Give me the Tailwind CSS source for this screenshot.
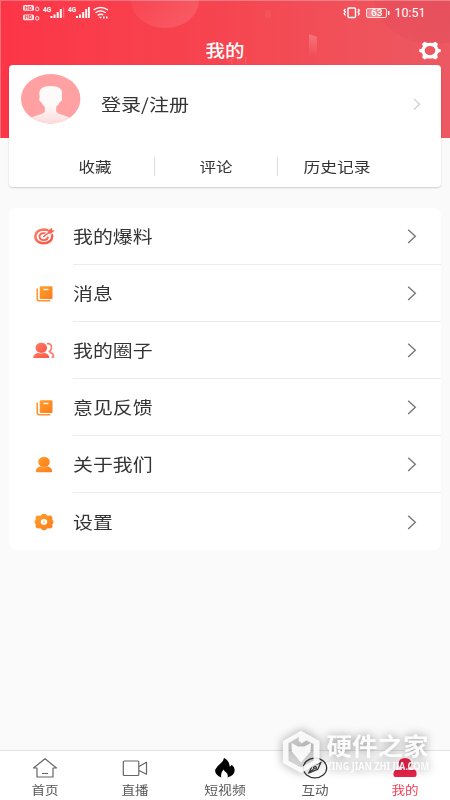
<!DOCTYPE html>
<html lang="zh-CN">
<head>
<meta charset="utf-8">
<title>我的</title>
<script src="https://cdn.jsdelivr.net/npm/@tailwindcss/browser@4"></script>
</head>
<body class="relative h-[800px] w-[450px] overflow-hidden bg-[#fafafa] text-[#333] font-['Noto_Sans_CJK_SC',sans-serif]">
<svg width="0" height="0" class="absolute">
  <defs>
    <linearGradient id="red" x1="0" y1="0" x2="1" y2="1"><stop stop-color="#ff7d62"/><stop offset="1" stop-color="#fb5549"/></linearGradient>
    <linearGradient id="orange" x1="0" y1="0" x2="1" y2="1"><stop stop-color="#ffa02c"/><stop offset="1" stop-color="#fc7c1c"/></linearGradient>
    <symbol id="chev" viewBox="0 0 10 16"><path d="M1.2 1.700 8.300 8.300 1.200 14.900" fill="none" stroke="currentColor" stroke-width="1.4"/></symbol>
    <symbol id="book" viewBox="0 0 18 18"><path d="M5 1.300h10.300q1.200 0 1.200 1.200v10.300q0 1.200-1.200 1.200H5q-1.300 0-1.300-1.200V2.500Q3.700 1.300 5 1.300Z" fill="url(#orange)"/><path d="M1.200 4v9.800q0 2 2 2h10.500" fill="none" stroke="#ff9130" stroke-width="1.500" stroke-linecap="round"/><path d="M7.500 4.500h5" stroke="#fff" stroke-width="1.300"/></symbol>
  </defs>
</svg>

<header class="relative h-[138px] overflow-hidden bg-gradient-to-r from-[#fc3547] via-[#f64550] to-[#ec5962]">
  <svg class="absolute inset-0" width="450" height="138" viewBox="0 0 450 138">
    <defs>
      <linearGradient id="c1" x1="0" y1="0" x2="1" y2="1"><stop stop-color="#fff" stop-opacity="0"/><stop offset="1" stop-color="#fff" stop-opacity=".14"/></linearGradient>
      <linearGradient id="c2" x1="1" y1="0" x2="0" y2="1"><stop stop-color="#c93048" stop-opacity=".35"/><stop offset="1" stop-color="#c93048" stop-opacity=".06"/></linearGradient>
      <linearGradient id="c3" x1="0" y1="0" x2="0" y2="1"><stop stop-color="#fff" stop-opacity=".22"/><stop offset="1" stop-color="#fff" stop-opacity="0"/></linearGradient>
    </defs>
    <ellipse cx="165" cy="1" rx="34" ry="27" fill="url(#c1)"/>
    <ellipse cx="434" cy="-4" rx="60" ry="48" fill="url(#c2)"/>
    <path d="m309 34 8 3v19h-8Z" fill="url(#c3)"/>
    <path d="M265 10h6v8h-6Z" fill="#fff" opacity=".05"/>
    <path d="m228 62 10-7v10m-6 0V54m13 11 1-8" stroke="#fff" opacity=".13" fill="none"/>
    <path d="M0 .5h450M.5 0v138" stroke="#fff" opacity=".28"/>
  </svg>
  <div class="relative flex h-[26px] items-center justify-between pl-[23px] pr-[24px] text-white">
    <svg width="87" height="18" viewBox="0 0 87 18" fill="#fff">
      <rect x="0" y="1" width="11" height="5.800" rx="1.500" opacity=".88"/><rect x="0" y="10.500" width="11" height="5.800" rx="1.500" opacity=".88"/>
      <g fill="#f43e4c" font-family="Roboto" font-size="5.500" font-weight="700"><text x="1.800" y="5.900">HD</text><text x="1.800" y="15.400">HD</text></g>
      <rect x="12.700" y="3.200" width="3" height="3.500" rx="1" fill="none" stroke="#fff" stroke-width=".9"/><rect x="12.700" y="12.600" width="3" height="3.500" rx="1" fill="none" stroke="#fff" stroke-width=".9"/>
      <g font-family="Roboto" font-size="6.500" font-weight="700"><text x="20" y="7.500">4G</text><text x="45" y="7.500">4G</text></g>
      <path d="M27.500 12h2v2h-2zM30.500 10.500h2V14h-2zM33.700 8h2v6h-2zM36.800 5h2v9h-2zM53 12h2v2h-2zM56 10.500h2V14h-2zM59.200 8h2v6h-2zM62.200 5h2v9h-2zM65 3h1.800v11H65z"/>
      <path d="M40 3.500h1.300V14H40z" opacity=".3"/>
      <g fill="none" stroke="#fff" stroke-width="1.400"><path d="M70.500 6q7.200-5 14.500 0M72.500 8.700q5-3.700 10.200 0M74.700 11.300q3-2 5.500-.3"/></g><path d="M75.800 12.700h3.200L77.400 14.500ZM80 12.500h1.600v2H80zM83 12.500h1.600v2H83z"/>
    </svg>
    <div class="flex items-center gap-[5px]">
      <svg width="49" height="14" viewBox="0 0 49 14" class="translate-x-px" fill="none" stroke="#fff"><rect x="6" y="2" width="7.500" height="9.500" rx="1" stroke-width="1.400"/><path d="m3.500 3-1.400 1.500L3.500 6 2.100 7.500l1.400 2M16 3l1.400 1.500L16 6l1.400 1.500L16 9.500" stroke-width="1.300"/><rect x="24.500" y="2.500" width="20" height="9" rx="1.500" stroke-opacity=".8"/><path d="M25 3h13v8H25z" fill="#fff" fill-opacity=".3" stroke="none"/><path d="M46.700 5v4" stroke-width="1.500"/><text x="29" y="10.200" font-family="Roboto" font-size="8.500" font-weight="500" textLength="11.500" lengthAdjust="spacingAndGlyphs" fill="#fff" stroke="none">63</text></svg>
      <span class="w-[31px] pt-px font-[Roboto] text-[12.500px] leading-none"><span class="inline-block origin-left -translate-x-[0.500px]">10:51</span></span>
    </div>
  </div>
  <div class="relative flex h-[48px] items-center justify-center text-white">
    <h1 class="-translate-x-[0.500px] scale-x-[1.180] text-[16.500px] font-medium leading-none">我的</h1>
    <svg class="absolute right-[9px] top-[15px]" width="22" height="19" viewBox="0 0 21 19" preserveAspectRatio="none"><path fill="#fff" fill-rule="evenodd" d="M5.300.8 8 2q2.500-.6 5 0L15.700.8 18 2.800l-.7 2.600q1 1 1.200 2.300l2.200.5v2.800l-2.200.5q-.3 1.200-1.200 2.200l.7 2.700-2.300 2L13 17.200q-2.500.6-5 0l-2.700 1.200L3 16.400l.7-2.700q-1-1-1.200-2.200L.3 11V8.200l2.200-.5q.3-1.300 1.200-2.300L3 2.800ZM10.500 5A5.100 4.600 0 0 0 10.500 14.200 5.100 4.600 0 0 0 10.500 5Z"/></svg>
  </div>
</header>

<main class="relative -mt-[73px] px-[9px]">
  <section class="h-[122px] rounded-[4px] bg-white shadow-[0_1px_2px_rgba(0,0,0,0.18)]">
    <div class="flex h-[78px] items-center pl-[11.500px] pr-[20px]">
      <svg width="60" height="50" viewBox="0 0 60 50" class="-mt-[10px]"><defs><clipPath id="face"><ellipse cx="29.700" cy="24.700" rx="29.700" ry="24.700"/></clipPath><linearGradient id="person" x1="0" y1="0" x2="0" y2="1"><stop offset=".5" stop-color="#fffafa"/><stop offset="1" stop-color="#fbdada"/></linearGradient></defs><g clip-path="url(#face)"><rect width="60" height="50" fill="#ffa0a2"/><path fill="url(#person)" d="M18.700 23q-1.500-6 2-8.700 3-2.300 9-2.300t9 2.300q3.500 2.700 2 8.700 1.300 4-2.200 5.500-1 2.500-3.300 4.200v5q1 1.700 6.800 3.300 4.500 1.300 7 3V50H10v-6q2.500-1.700 7-3 5.800-1.600 6.800-3.300v-5q-2.300-1.700-3.300-4.200-3.300-1.500-1.800-5.500Z"/></g></svg>
      <span class="-mt-[2px] ml-[20.500px] origin-left scale-x-[1.180] text-[17px] leading-none">登录/注册</span>
      <svg class="ml-auto text-[#ccc]" width="8" height="14"><use href="#chev" width="8" height="14"/></svg>
    </div>
    <div class="flex h-[44px] items-start pl-[23px] pr-[43px] pt-[14px] text-[14px] leading-[18px]">
      <div class="w-[122px] pl-[3px] text-center"><span class="inline-block scale-x-[1.180]">收藏</span></div>
      <div class="h-[19px] w-px bg-[#ddd]"></div>
      <div class="w-[122px] text-center"><span class="inline-block scale-x-[1.180]">评论</span></div>
      <div class="h-[19px] w-px bg-[#ddd]"></div>
      <div class="w-[117px] text-center"><span class="inline-block scale-x-[1.200]">历史记录</span></div>
    </div>
  </section>

  <section class="mt-[21px] grid h-[342px] grid-rows-6 rounded-[8px] bg-white text-[17px] leading-none">
    <div class="flex items-center pl-[24px]">
      <svg width="22" height="18" viewBox="0 0 22 18"><path d="M16.300 3.200Q14 1.500 10.800 1.500 2.600 2 2.300 8.600q.6 6.300 8.500 6.700 7.700-.4 8.400-6.700 0-1.300-.5-2.300" fill="none" stroke="url(#red)" stroke-width="2.500"/><path d="M13.200 5.500q-1.100-.4-2.400-.4-4.200.2-4.300 3.500.3 3.300 4.300 3.500 4.100-.3 4.200-3.500" fill="none" stroke="#fb6353" stroke-width="1.900"/><path d="m12 7.700 6.500-5.400" stroke="#fff" stroke-width="3.300"/><path d="m10.300 9 6-4.800M15.500 5l.5-2L18.300 1.200v1.500l1.700.3-2.400 1.900Z" fill="#fb6353" stroke="#fb6353" stroke-width="1.500"/></svg>
      <div class="ml-[17.500px] flex h-full flex-1 items-center justify-between border-b border-[#ececec] pr-[24px]"><span class="-mt-[2px] origin-left scale-x-[1.170]">我的爆料</span><svg class="text-[#777]" width="10" height="16"><use href="#chev" width="10" height="16"/></svg></div>
    </div>
    <div class="flex items-center pl-[26.500px]">
      <svg width="18" height="18"><use href="#book" width="18" height="18"/></svg>
      <div class="ml-[19px] flex h-full flex-1 items-center justify-between border-b border-[#ececec] pr-[24px]"><span class="-mt-[2px] origin-left scale-x-[1.170]">消息</span><svg class="text-[#777]" width="10" height="16"><use href="#chev" width="10" height="16"/></svg></div>
    </div>
    <div class="flex items-center pl-[24px]">
      <svg width="22" height="18" viewBox="0 0 22 18"><path d="M14 1.700q4.500-.6 4.500 3.800 0 2.500-2 4 .8 1.200 2.700 2 1.300.8 1.300 3.500h-2" fill="none" stroke="#fd7767" stroke-width="1.600"/><ellipse cx="8.300" cy="5.800" rx="5.800" ry="5.100" fill="url(#red)"/><path d="M.2 16q0-3.700 4.500-5.300 3.200 1.600 6.900 0 4.700 1.500 4.700 5.300Z" fill="url(#red)"/></svg>
      <div class="ml-[17.500px] flex h-full flex-1 items-center justify-between border-b border-[#ececec] pr-[24px]"><span class="-mt-[2px] origin-left scale-x-[1.170]">我的圈子</span><svg class="text-[#777]" width="10" height="16"><use href="#chev" width="10" height="16"/></svg></div>
    </div>
    <div class="flex items-center pl-[26.500px]">
      <svg width="18" height="18"><use href="#book" width="18" height="18"/></svg>
      <div class="ml-[19px] flex h-full flex-1 items-center justify-between border-b border-[#ececec] pr-[24px]"><span class="-mt-[2px] origin-left scale-x-[1.170]">意见反馈</span><svg class="text-[#777]" width="10" height="16"><use href="#chev" width="10" height="16"/></svg></div>
    </div>
    <div class="flex items-center pl-[26px]">
      <svg width="18" height="18" viewBox="0 0 18 18" fill="url(#orange)"><ellipse cx="9" cy="5.900" rx="5.800" ry="5.200"/><path d="M.9 15q0-3.200 4.600-4.700 3.500 1.800 7 0Q17.100 11.800 17.100 15q0 1.200-1 1.200H2q-1.100 0-1.100-1.200Z"/></svg>
      <div class="ml-[19.500px] flex h-full flex-1 items-center justify-between border-b border-[#ececec] pr-[24px]"><span class="-mt-[2px] origin-left scale-x-[1.170]">关于我们</span><svg class="text-[#777]" width="10" height="16"><use href="#chev" width="10" height="16"/></svg></div>
    </div>
    <div class="flex items-center pl-[25px]">
      <svg width="20" height="18" viewBox="0 0 20 18" fill="url(#orange)"><path fill-rule="evenodd" d="M7.500 2Q8 .7 10 .7t2.500 1.300q.7 1 2 .7 2-.8 3.300.5 1.200 1.400.6 2.800-.4 1.200.6 1.600.5.400.5 1.400t-.5 1.400q-1 .4-.6 1.600.6 1.400-.6 2.800-1.300 1.300-3.300.5-1.300-.3-2 .7-.5 1.300-2.500 1.300T7.500 16q-.7-1-2-.7-2 .8-3.300-.5Q1 13.400 1.600 12q.4-1.200-.6-1.600Q.5 10 .5 9T1 7.600Q2 7.200 1.600 6 1 4.600 2.200 3.200q1.300-1.300 3.300-.5 1.300.3 2-.7ZM10 6.100a3.200 2.800 0 1 0 0 5.600A3.200 2.800 0 1 0 10 6.100Z"/><ellipse cx="10" cy="8.900" rx="1" ry=".9" opacity=".5"/></svg>
      <div class="ml-[18.500px] flex h-full flex-1 items-center justify-between pr-[24px]"><span class="-mt-px origin-left scale-x-[1.170]">设置</span><svg class="text-[#777]" width="10" height="16"><use href="#chev" width="10" height="16"/></svg></div>
    </div>
  </section>
</main>

<nav class="mt-[200px] grid h-[50px] grid-cols-5 border-t border-[#e2e2e2] bg-white text-[12px] leading-[14px] text-[#555]">
  <div class="flex flex-col items-center pt-[6px]"><svg width="26" height="22" viewBox="0 0 26 22" fill="none" stroke="#666" stroke-width="1.200"><path d="M5 11H1.500L13 1.800 24.500 11H21v9H5ZM10 16.500h6" stroke-linejoin="round"/></svg><span class="mt-[4px] scale-x-[1.130]">首页</span></div>
  <div class="flex flex-col items-center pt-[6px]"><svg width="26" height="22" viewBox="0 0 26 22" fill="none" stroke="#666" stroke-width="1.200"><rect x="1.300" y="4" width="15.500" height="14.500" rx="1"/><path d="m17 9.500 7.500-4.300v12L17 13.500" stroke-linejoin="round"/></svg><span class="mt-[4px] scale-x-[1.130]">直播</span></div>
  <div class="flex flex-col items-center pt-[6px]"><svg width="22" height="22" viewBox="0 0 22 22"><path fill="#000" d="M10 1q-.4 2.700-3.200 5.200Q2.500 9.500 1.300 12.500.2 17.600 7.400 20.600 6 16 9.700 12.600q.7 1.900 2.300 2.700 2.500 2 1.500 5.300 7-2.200 7.200-7.300.1-3.200-3-5.500-.7 1.700-2 1.700Q15.200 3.500 10 1Z"/></svg><span class="mt-[4px] scale-x-[1.150]">短视频</span></div>
  <div class="flex flex-col items-center pt-[6px]"><svg width="26" height="22" viewBox="0 0 26 22" fill="#fff" stroke="#333" stroke-width="1.200"><ellipse cx="13" cy="11" rx="11.700" ry="9.800"/><path d="m7 15.800 3-6.500 8.800-3.700-3 6.600Z"/><path d="M7 15.800l4.500-3.600"/><ellipse cx="13" cy="10.800" rx="1.500" ry="1.200"/></svg><span class="mt-[4px] scale-x-[1.130]">互动</span></div>
  <div class="flex flex-col items-center pt-[6px] text-[#f43b52]"><svg width="24" height="22" viewBox="0 0 24 22" fill="#e8234a"><path d="M12 1q6.300.2 6.300 5.500 0 3.700-3.300 5v1.200h6.500q2 .3 2 3v2.500q0 1.800-2 1.800h-19q-2 0-2-1.800v-2.500q0-2.700 2-3H9v-1.200q-3.300-1.300-3.300-5Q5.700 1.200 12 1Z"/></svg><span class="mt-[4px] scale-x-[1.130]">我的</span></div>
</nav>

<div class="pointer-events-none absolute left-[282px] top-[730px] text-white">
  <svg width="156" height="44" viewBox="0 0 156 44" class="overflow-visible drop-shadow-[0_0_5px_rgba(0,0,0,0.45)]" fill="#fff">
    <path fill-rule="evenodd" d="M19 .8 37.500 11v22L19 43 1 33V11ZM17 7 6.500 13v17.700L19 37.500l12.500-6.800V14l-7-3.600-5 2.800-3-2.600Z" opacity=".88"/>
    <path d="m9.500 13 6.500 3.500h6.500L29 13l-.5 8.500L19 32.500 9.800 21.500Z" opacity=".9"/>
    <text x="44.500" y="25" font-family="Noto Sans CJK SC" font-size="24" font-weight="700" textLength="102" lengthAdjust="spacingAndGlyphs" opacity=".92">硬件之家</text>
    <text x="44" y="39.800" font-family="Noto Sans" font-size="9.800" font-weight="700" textLength="103" lengthAdjust="spacingAndGlyphs" opacity=".9">YING JIAN ZHI JIA.COM</text>
  </svg>
</div>
</body>
</html>
